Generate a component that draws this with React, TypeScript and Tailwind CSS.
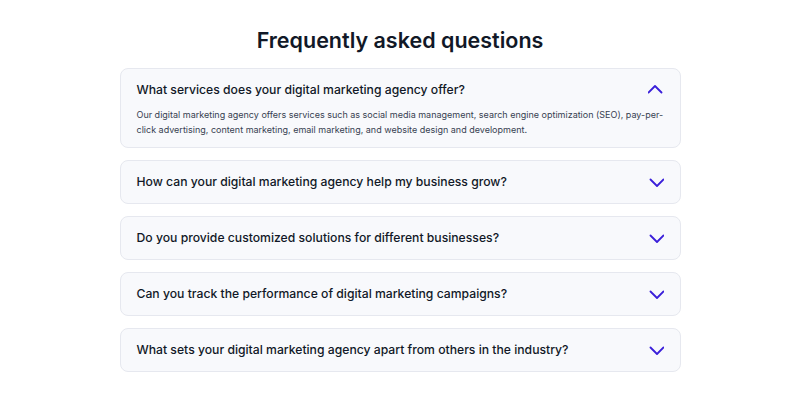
import { useState } from "react";

/* ── Data ─────────────────────────────────────────────────── */

const FAQS = [
    {
        q: "What services does your digital marketing agency offer?",
        a: "Our digital marketing agency offers services such as social media management, search engine optimization (SEO), pay-per-click advertising, content marketing, email marketing, and website design and development.",
    },
    {
        q: "How can your digital marketing agency help my business grow?",
        a: "We build strategies around your goals, reach the right audience and track the results so your marketing keeps improving.",
    },
    {
        q: "Do you provide customized solutions for different businesses?",
        a: "Yes. Every plan is tailored to the size, industry and budget of your business.",
    },
    {
        q: "Can you track the performance of digital marketing campaigns?",
        a: "Yes, we provide regular reports with clear metrics for every campaign we run.",
    },
    {
        q: "What sets your digital marketing agency apart from others in the industry?",
        a: "Our team combines creative work with data-driven decisions and transparent communication.",
    },
];

/* ── Chevron ──────────────────────────────────────────────── */

function Chevron({ open }: { open: boolean }) {
    return (
        <svg
            width="16"
            height="16"
            viewBox="0 0 16 16"
            fill="none"
            stroke="#3a1fd9"
            strokeWidth="1.8"
            strokeLinecap="round"
            strokeLinejoin="round"
            className={open ? "rotate-180" : ""}
        >
            <path d="M2.5 5.5 9 12 15.5 5.5" />
        </svg>
    );
}

/* ── Page ──────────────────────────────────────────────────── */

export default function App() {
    const [open, setOpen] = useState<number | null>(0);

    return (
        <div
            className="min-h-screen bg-white pt-6"
            style={{ fontFamily: "Inter, 'Noto Sans', sans-serif" }}
        >
            <h1 className="text-center text-[21.5px] leading-8 font-semibold text-[#111827]">
                Frequently asked questions
            </h1>

            <div className="mx-auto mt-3 w-[561px] space-y-3">
                {FAQS.map((f, i) => {
                    const isOpen = open === i;
                    return (
                        <div
                            key={f.q}
                            className="rounded-lg border border-[#e6e8ef] bg-[#f8f9fc]"
                        >
                            <button
                                onClick={() => setOpen(isOpen ? null : i)}
                                className={`flex w-full items-center justify-between px-4 text-left ${
                                    isOpen ? "pt-[11px] pb-[7px]" : "py-[11px]"
                                }`}
                            >
                                <span className="text-[12.2px] leading-5 font-medium text-[#111827]">
                                    {f.q}
                                </span>
                                <Chevron open={isOpen} />
                            </button>
                            {isOpen && (
                                <p className="px-4 pb-[10px] text-[9px] leading-[15px] text-[#374151]">
                                    {f.a}
                                </p>
                            )}
                        </div>
                    );
                })}
            </div>
        </div>
    );
}
